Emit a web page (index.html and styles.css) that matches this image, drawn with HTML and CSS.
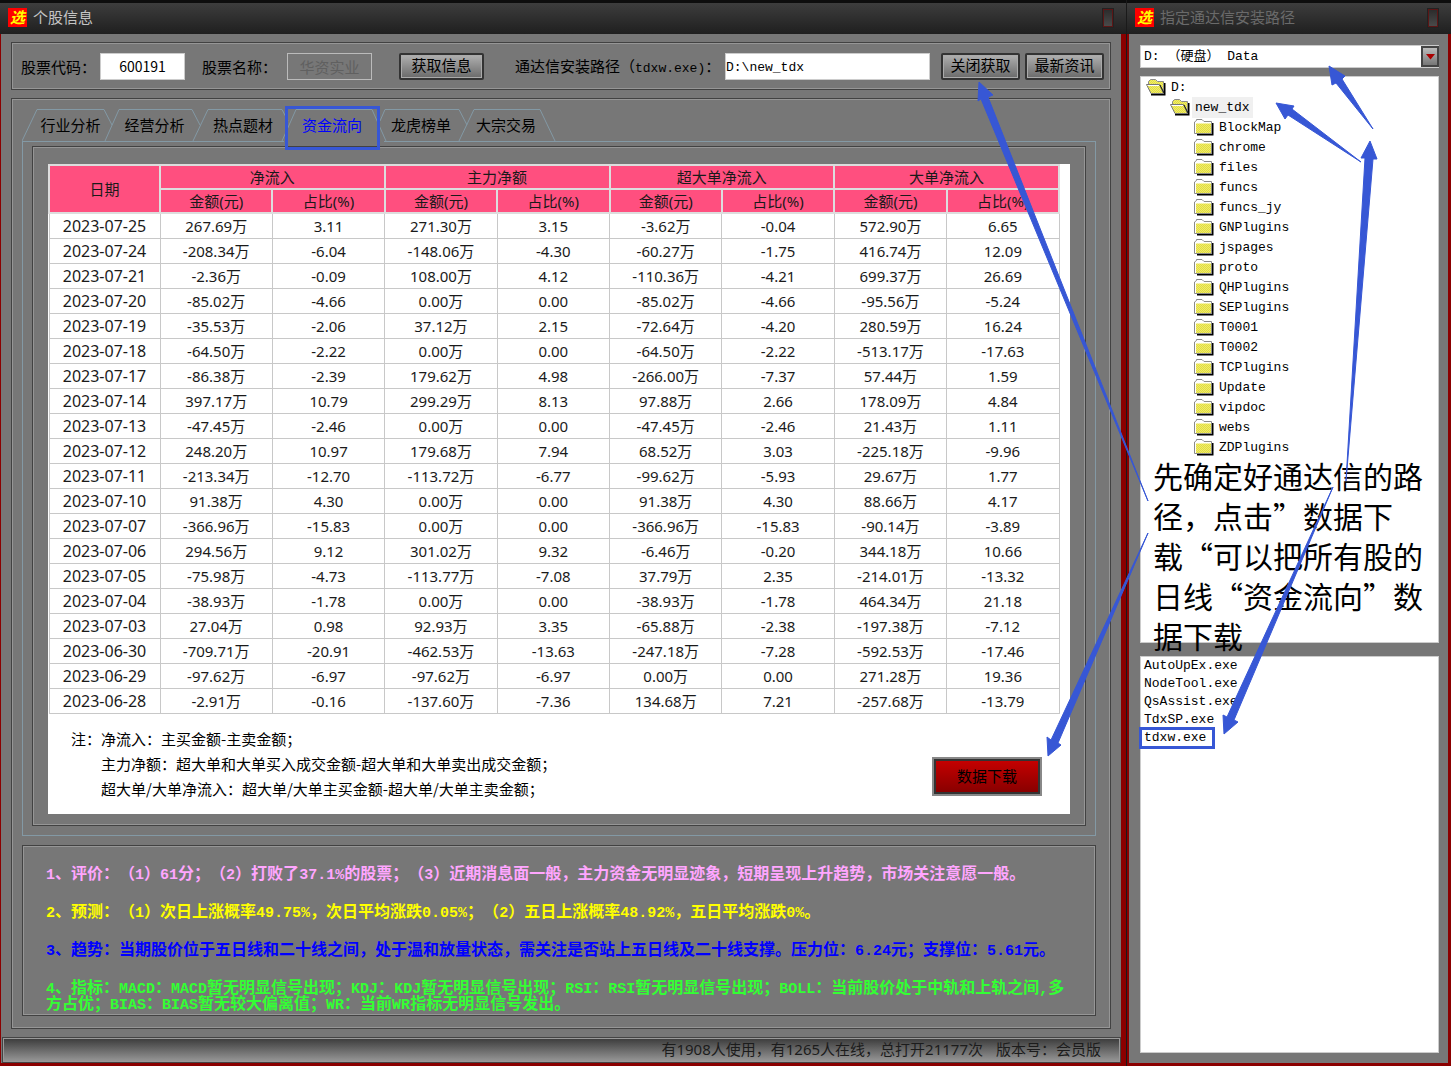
FILE: index.html
```html
<!DOCTYPE html>
<html lang="zh-CN">
<head>
<meta charset="utf-8">
<title>个股信息</title>
<link rel="stylesheet" href="styles.css">
</head>
<body>
<svg class="defs" aria-hidden="true">
  <defs>
    <pattern id="dots" width="2" height="2" patternUnits="userSpaceOnUse"><rect width="2" height="2" fill="#e3df3c"/><rect width="1" height="1" fill="#eeea70"/><rect x="1" y="1" width="1" height="1" fill="#eeea70"/></pattern>
  </defs>
  <symbol id="folder" viewBox="0 0 20 17">
    <path d="M3 15.500H18.500V4" fill="none" stroke="#000" stroke-width="2"/>
    <path d="M.5 14.500V3L2.500 1.500V.5H8L10 2.500H17.500V14.500Z" fill="#fff" stroke="#8a8a8a"/>
    <path d="M2 4H17V14H2Z" fill="url(#dots)"/>
    <path d="M1.500 14V4H17" fill="none" stroke="#fff"/>
  </symbol>
  <symbol id="folder-open" viewBox="0 0 20 17">
    <path d="M5 15.500H18.500V4" fill="none" stroke="#000" stroke-width="2"/>
    <path d="M2.500 5.500V2.500L4.500 .5H9.500L11.500 2.500H17.500V14" fill="url(#dots)" stroke="#8a8a8a"/>
    <path d="M.5 5.500H13.500L17.500 14.500H5Z" fill="url(#dots)" stroke="#777"/>
    <path d="M1.500 6.500H13" stroke="#fff"/>
    <path d="M14 6L18 14" stroke="#111"/>
  </symbol>
</svg>

<div class="desktop">
  <main class="window window-main">
    <header class="titlebar">
      <span class="logo">选</span>
      <h1 class="title">个股信息</h1>
      <button class="close" type="button" aria-label="关闭"></button>
    </header>
    <div class="frame">
      <form class="group toolbar">
        <label class="label-code" for="code">股票代码：</label>
        <input class="field field-code" id="code" type="text" value="600191">
        <label class="label-name" for="name">股票名称：</label>
        <input class="field field-name" id="name" type="text" value="华资实业" disabled>
        <button class="btn btn-fetch" type="button">获取信息</button>
        <label class="label-path" for="path">通达信安装路径（<span class="mono">tdxw.exe)</span>：</label>
        <input class="field field-path" id="path" type="text" value="D:\new_tdx">
        <button class="btn btn-stop" type="button">关闭获取</button>
        <button class="btn" type="button">最新资讯</button>
      </form>

      <section class="group content">
        <nav class="tabs">
          <svg class="tab-lines" width="540" height="33" viewBox="0 0 540 33" aria-hidden="true">
            <path d="M0 32L15 .5H82L90 16M83 32L97 .5H170L178 16M171 32L186 .5H260L266 12M260 32L274 .5H350L364 32M358 12L363 .5H437L445 16M437 32L452 .5H518L533 32"/>
          </svg>
          <button class="tab tab-a" type="button">行业分析</button>
          <button class="tab tab-b" type="button">经营分析</button>
          <button class="tab tab-c" type="button">热点题材</button>
          <button class="tab tab-d active" type="button">资金流向</button>
          <button class="tab tab-c" type="button">龙虎榜单</button>
          <button class="tab tab-e" type="button">大宗交易</button>
        </nav>
        <div class="pane">
          <div class="group pane-inner">
            <div class="sheet">
              <table class="flow">
                <colgroup><col class="col-date"><col span="8"></colgroup>
                <thead>
                  <tr><th rowspan="2">日期</th><th colspan="2">净流入</th><th colspan="2">主力净额</th><th colspan="2">超大单净流入</th><th colspan="2">大单净流入</th></tr>
                  <tr><th>金额(元)</th><th>占比(%)</th><th>金额(元)</th><th>占比(%)</th><th>金额(元)</th><th>占比(%)</th><th>金额(元)</th><th>占比(%)</th></tr>
                </thead>
                <tbody>
                  <tr><td>2023-07-25</td><td>267.69万</td><td>3.11</td><td>271.30万</td><td>3.15</td><td>-3.62万</td><td>-0.04</td><td>572.90万</td><td>6.65</td></tr>
                  <tr><td>2023-07-24</td><td>-208.34万</td><td>-6.04</td><td>-148.06万</td><td>-4.30</td><td>-60.27万</td><td>-1.75</td><td>416.74万</td><td>12.09</td></tr>
                  <tr><td>2023-07-21</td><td>-2.36万</td><td>-0.09</td><td>108.00万</td><td>4.12</td><td>-110.36万</td><td>-4.21</td><td>699.37万</td><td>26.69</td></tr>
                  <tr><td>2023-07-20</td><td>-85.02万</td><td>-4.66</td><td>0.00万</td><td>0.00</td><td>-85.02万</td><td>-4.66</td><td>-95.56万</td><td>-5.24</td></tr>
                  <tr><td>2023-07-19</td><td>-35.53万</td><td>-2.06</td><td>37.12万</td><td>2.15</td><td>-72.64万</td><td>-4.20</td><td>280.59万</td><td>16.24</td></tr>
                  <tr><td>2023-07-18</td><td>-64.50万</td><td>-2.22</td><td>0.00万</td><td>0.00</td><td>-64.50万</td><td>-2.22</td><td>-513.17万</td><td>-17.63</td></tr>
                  <tr><td>2023-07-17</td><td>-86.38万</td><td>-2.39</td><td>179.62万</td><td>4.98</td><td>-266.00万</td><td>-7.37</td><td>57.44万</td><td>1.59</td></tr>
                  <tr><td>2023-07-14</td><td>397.17万</td><td>10.79</td><td>299.29万</td><td>8.13</td><td>97.88万</td><td>2.66</td><td>178.09万</td><td>4.84</td></tr>
                  <tr><td>2023-07-13</td><td>-47.45万</td><td>-2.46</td><td>0.00万</td><td>0.00</td><td>-47.45万</td><td>-2.46</td><td>21.43万</td><td>1.11</td></tr>
                  <tr><td>2023-07-12</td><td>248.20万</td><td>10.97</td><td>179.68万</td><td>7.94</td><td>68.52万</td><td>3.03</td><td>-225.18万</td><td>-9.96</td></tr>
                  <tr><td>2023-07-11</td><td>-213.34万</td><td>-12.70</td><td>-113.72万</td><td>-6.77</td><td>-99.62万</td><td>-5.93</td><td>29.67万</td><td>1.77</td></tr>
                  <tr><td>2023-07-10</td><td>91.38万</td><td>4.30</td><td>0.00万</td><td>0.00</td><td>91.38万</td><td>4.30</td><td>88.66万</td><td>4.17</td></tr>
                  <tr><td>2023-07-07</td><td>-366.96万</td><td>-15.83</td><td>0.00万</td><td>0.00</td><td>-366.96万</td><td>-15.83</td><td>-90.14万</td><td>-3.89</td></tr>
                  <tr><td>2023-07-06</td><td>294.56万</td><td>9.12</td><td>301.02万</td><td>9.32</td><td>-6.46万</td><td>-0.20</td><td>344.18万</td><td>10.66</td></tr>
                  <tr><td>2023-07-05</td><td>-75.98万</td><td>-4.73</td><td>-113.77万</td><td>-7.08</td><td>37.79万</td><td>2.35</td><td>-214.01万</td><td>-13.32</td></tr>
                  <tr><td>2023-07-04</td><td>-38.93万</td><td>-1.78</td><td>0.00万</td><td>0.00</td><td>-38.93万</td><td>-1.78</td><td>464.34万</td><td>21.18</td></tr>
                  <tr><td>2023-07-03</td><td>27.04万</td><td>0.98</td><td>92.93万</td><td>3.35</td><td>-65.88万</td><td>-2.38</td><td>-197.38万</td><td>-7.12</td></tr>
                  <tr><td>2023-06-30</td><td>-709.71万</td><td>-20.91</td><td>-462.53万</td><td>-13.63</td><td>-247.18万</td><td>-7.28</td><td>-592.53万</td><td>-17.46</td></tr>
                  <tr><td>2023-06-29</td><td>-97.62万</td><td>-6.97</td><td>-97.62万</td><td>-6.97</td><td>0.00万</td><td>0.00</td><td>271.28万</td><td>19.36</td></tr>
                  <tr><td>2023-06-28</td><td>-2.91万</td><td>-0.16</td><td>-137.60万</td><td>-7.36</td><td>134.68万</td><td>7.21</td><td>-257.68万</td><td>-13.79</td></tr>
                </tbody>
              </table>
              <div class="sheet-foot">
                <div class="notes">
                  <p class="note note-lead">注：净流入：主买金额-主卖金额；</p>
                  <p class="note">主力净额：超大单和大单买入成交金额-超大单和大单卖出成交金额；</p>
                  <p class="note">超大单/大单净流入：超大单/大单主买金额-超大单/大单主卖金额；</p>
                </div>
                <button class="download" type="button">数据下载</button>
              </div>
            </div>
          </div>
        </div>

        <div class="group analysis">
          <p class="line pink"><span class="n">1</span>、评价：（<span class="n">1</span>）<span class="n">61</span>分；（<span class="n">2</span>）打败了<span class="n">37.1%</span>的股票；（<span class="n">3</span>）近期消息面一般，主力资金无明显迹象，短期呈现上升趋势，市场关注意愿一般。</p>
          <p class="line yellow"><span class="n">2</span>、预测：（<span class="n">1</span>）次日上涨概率<span class="n">49.75%</span>，次日平均涨跌<span class="n">0.05%</span>；（<span class="n">2</span>）五日上涨概率<span class="n">48.92%</span>，五日平均涨跌<span class="n">0%</span>。</p>
          <p class="line blue"><span class="n">3</span>、趋势：当期股价位于五日线和二十线之间，处于温和放量状态，需关注是否站上五日线及二十线支撑。压力位：<span class="n">6.24</span>元；支撑位：<span class="n">5.61</span>元。</p>
          <p class="line green"><span class="n">4</span>、指标：<span class="n">MACD</span>：<span class="n">MACD</span>暂无明显信号出现；<span class="n">KDJ</span>：<span class="n">KDJ</span>暂无明显信号出现；<span class="n">RSI</span>：<span class="n">RSI</span>暂无明显信号出现；<span class="n">BOLL</span>：当前股价处于中轨和上轨之间<span class="n">,</span>多<br>方占优；<span class="n">BIAS</span>：<span class="n">BIAS</span>暂无较大偏离值；<span class="n">WR</span>：当前<span class="n">WR</span>指标无明显信号发出。</p>
        </div>
      </section>

      <footer class="status"><span>有1908人使用，有1265人在线，总打开21177次</span><span>版本号：会员版</span></footer>
    </div>
  </main>

  <aside class="window window-side">
    <header class="titlebar">
      <span class="logo">选</span>
      <h2 class="title title-dim">指定通达信安装路径</h2>
      <button class="close" type="button" aria-label="关闭"></button>
    </header>
    <div class="frame side-frame">
      <div class="drive">
        <select class="drive-select" aria-label="驱动器"><option>D: （硬盘） Data</option></select>
        <span class="drive-arrow"><svg width="9" height="6" viewBox="0 0 9 6" aria-hidden="true"><path d="M0 0H9L4.500 5.500Z" fill="#a00"/></svg></span>
      </div>
      <ul class="box tree">
        <li class="node"><svg class="ico"><use href="#folder-open"/></svg><span>D:</span></li>
        <li class="node level-1"><svg class="ico"><use href="#folder-open"/></svg><span class="picked">new_tdx</span></li>
        <li class="node level-2"><svg class="ico"><use href="#folder"/></svg><span>BlockMap</span></li>
        <li class="node level-2"><svg class="ico"><use href="#folder"/></svg><span>chrome</span></li>
        <li class="node level-2"><svg class="ico"><use href="#folder"/></svg><span>files</span></li>
        <li class="node level-2"><svg class="ico"><use href="#folder"/></svg><span>funcs</span></li>
        <li class="node level-2"><svg class="ico"><use href="#folder"/></svg><span>funcs_jy</span></li>
        <li class="node level-2"><svg class="ico"><use href="#folder"/></svg><span>GNPlugins</span></li>
        <li class="node level-2"><svg class="ico"><use href="#folder"/></svg><span>jspages</span></li>
        <li class="node level-2"><svg class="ico"><use href="#folder"/></svg><span>proto</span></li>
        <li class="node level-2"><svg class="ico"><use href="#folder"/></svg><span>QHPlugins</span></li>
        <li class="node level-2"><svg class="ico"><use href="#folder"/></svg><span>SEPlugins</span></li>
        <li class="node level-2"><svg class="ico"><use href="#folder"/></svg><span>T0001</span></li>
        <li class="node level-2"><svg class="ico"><use href="#folder"/></svg><span>T0002</span></li>
        <li class="node level-2"><svg class="ico"><use href="#folder"/></svg><span>TCPlugins</span></li>
        <li class="node level-2"><svg class="ico"><use href="#folder"/></svg><span>Update</span></li>
        <li class="node level-2"><svg class="ico"><use href="#folder"/></svg><span>vipdoc</span></li>
        <li class="node level-2"><svg class="ico"><use href="#folder"/></svg><span>webs</span></li>
        <li class="node level-2"><svg class="ico"><use href="#folder"/></svg><span>ZDPlugins</span></li>
      </ul>
      <ul class="box files">
        <li class="file">AutoUpEx.exe</li>
        <li class="file">NodeTool.exe</li>
        <li class="file">QsAssist.exe</li>
        <li class="file">TdxSP.exe</li>
        <li class="file marked">tdxw.exe</li>
      </ul>
    </div>
  </aside>

  <!-- Tutorial callout drawn over both windows -->
  <p class="callout">先确定好通达信的路<br>径，点击”数据下<br>载“可以把所有股的<br>日线“资金流向”数<br>据下载</p>
  <svg class="arrows" width="1451" height="1066" viewBox="0 0 1451 1066" aria-hidden="true">
    <path d="M979 82L993 95L988 97L1148 501L981 99L978 101Z"/>
    <path d="M1048 756L1047 737L1051 740L1148 533L1058 743L1061 745Z"/>
    <path d="M1329 66L1345 76L1342 79L1373 129L1336 83L1332 85Z"/>
    <path d="M1276 103L1294 106L1292 109L1361 162L1288 115L1285 119Z"/>
    <path d="M1370 141L1377 159L1373 159L1346 481L1365 158L1361 158Z"/>
    <path d="M1224 734L1223 715L1227 717L1333 487L1234 720L1238 722Z"/>
  </svg>
</div>
</body>
</html>
```

FILE: styles.css
```css
*, *::before, *::after { box-sizing: border-box; }

body {
  margin: 0;
  background: #777;
  color: #000;
  font: 15px/20px "Noto Sans CJK SC", sans-serif;
  text-spacing-trim: space-all;
}

h1, h2, p, ul { margin: 0; padding: 0; }
ul { list-style: none; }
button, input, select { font: inherit; color: inherit; margin: 0; }

.defs { position: absolute; width: 0; height: 0; }
.mono { font-family: "Liberation Mono", monospace; font-size: 13px; }

/* Windows */
.desktop { position: relative; display: flex; min-height: 100vh; overflow: hidden; }
.window { display: flex; flex-direction: column; }
.window-main { flex: 1; min-width: 0; }
.window-side { flex: 0 0 325px; border-left: 1px solid #1a1a1a; }

.titlebar {
  display: flex;
  align-items: center;
  gap: 6px;
  height: 34px;
  padding: 0 13px 0 8px;
  border-top: 3px solid #0d0d0d;
  background: linear-gradient(#3d3d3d, #1f1f1f);
}
.logo {
  width: 19px;
  height: 19px;
  margin-bottom: 2px;
  background: #f00;
  color: #ff0;
  font-size: 15px;
  font-weight: 700;
  font-style: italic;
  line-height: 18px;
  text-align: center;
}
.title { flex: 1; margin-bottom: 3px; color: #c4c4c4; font-size: 15px; font-weight: 400; }
.title-dim { color: #6a6a6a; }
.close { width: 10px; height: 18px; margin-bottom: 2px; padding: 0; border: 1px solid #5b1616; outline: 1px solid #222; background: linear-gradient(#2c2c2c, #4a4a4a); }

.frame {
  flex: 1;
  display: flex;
  flex-direction: column;
  border: solid #8b0000;
  border-width: 0 5px 4px 1px;
  background: #777;
}
.window-main .frame { padding-top: 8px; }

/* Etched group box */
.group { border: 1px solid #424242; box-shadow: inset 0 0 0 1px #969696; }

/* Query bar */
.toolbar {
  display: flex;
  align-items: center;
  height: 48px;
  margin: 0 10px 8px;
  padding: 0 6px 0 9px;
  white-space: nowrap;
}
.toolbar label { padding-top: 2px; }
.field { height: 27px; border: 1px solid #ccc; background: #fff; }
.label-code { width: 79px; }
.label-name { width: 85px; }
.label-path { width: 210px; }
.field-code { width: 85px; margin-right: 17px; font-size: 14px; text-align: center; }
.field-name { width: 85px; margin-right: 27px; border-color: #bbb; background: transparent; color: #606060; text-align: center; }
.field-path { flex: 1; min-width: 0; margin-right: 11px; padding: 2px 0 0; font-family: "Liberation Mono", monospace; font-size: 13px; }
.btn {
  width: 79px;
  height: 27px;
  padding: 0 0 2px;
  border: 2px solid #333;
  border-radius: 2px;
  box-shadow: inset 0 0 0 1px #aaa;
  background: linear-gradient(#b0b0b0, #6a6a6a);
  line-height: 20px;
}
.btn-fetch { width: 85px; margin-right: 31px; }
.btn-stop { margin-right: 5px; }

/* Content */
.content { flex: 1; margin: 0 10px 8px; padding: 10px 14px 12px 10px; }

.tabs { position: relative; display: flex; padding-left: 7px; height: 32px; }
.tab-lines { position: absolute; left: 0; top: 0; }
.tab-lines path { fill: none; stroke: #8399a5; stroke-width: 1; }
.tab { position: relative; padding: 0; border: 0; background: none; }
.tab-a { width: 83px; }
.tab-b { width: 85px; }
.tab-c { width: 92px; }
.tab-d { width: 86px; }
.tab-e { width: 78px; }
.active { color: #00f; }
.active::before { content: ""; position: absolute; left: -5px; right: -9px; bottom: -1px; height: 1px; background: #777; }
.active::after { content: ""; position: absolute; left: -4px; right: -5px; top: -3px; height: 44px; border: 3px solid #3757d5; }

.pane { padding: 4px 9px 9px; border: 1px solid #8399a5; }
.pane-inner { padding: 17px 15px 11px; }
.sheet { min-height: 650px; background: #fff; }

.flow {
  width: calc(100% - 10px);
  border-collapse: collapse;
  table-layout: fixed;
  color: #1a1a1a;
  font-family: "Noto Sans", "Noto Sans CJK SC", sans-serif;
}
.col-date { width: 111px; }
.flow th, .flow td { height: 25px; padding: 0; border: 1px solid #c8c8c8; line-height: 20px; text-align: center; }
.flow thead th { height: 24px; border: 2px solid #ddd; background: #ff4f7f; font-weight: 400; }
.flow td:first-child { font-size: 16px; }

.sheet-foot { display: flex; justify-content: space-between; align-items: center; padding: 12px 28px 0 22px; }
.note { padding-left: 31px; line-height: 25px; }
.note-lead { text-indent: -30px; }
.download {
  width: 110px;
  height: 39px;
  margin-top: 26px;
  padding: 0;
  border: 2px solid #888;
  outline: 2px solid #333;
  outline-offset: -4px;
  background: linear-gradient(#c80000, #850000);
}

.analysis { margin-top: 9px; padding: 18px 24px 4px 23px; height: 171px; }
.line { margin-bottom: 22px; font-size: 16px; font-weight: 700; line-height: 16px; white-space: nowrap; }
.n { font-family: "Liberation Mono", monospace; font-size: 15px; line-height: 0; }
.pink { color: #ffa6ff; }
.yellow { color: #ff0; }
.blue { color: #00f; }
.green { color: #3f3; }

.status {
  display: flex;
  justify-content: flex-end;
  align-items: center;
  gap: 13px;
  height: 26px;
  margin: 0 0 0 1px;
  padding: 0 19px 2px 0;
  border: 1px solid #444;
  box-shadow: inset 0 0 0 1px #999;
  background: linear-gradient(#3a3a3a, #999);
  color: #1c1c1c;
  font-family: "Noto Sans", "Noto Sans CJK SC", sans-serif;
}

/* Install path window */
.side-frame { border-width: 0 3px 4px 2px; padding: 11px 9px 10px 11px; }
.drive { position: relative; display: flex; height: 23px; margin-bottom: 8px; }
.drive-select {
  flex: 1;
  padding: 0 0 0 3px;
  border: 1px solid #ccc;
  background: #fff;
  appearance: none;
  font-family: "Liberation Mono", "Noto Sans CJK SC", monospace;
  font-size: 13px;
}
.drive-arrow {
  position: absolute;
  right: 0;
  top: 1px;
  display: flex;
  align-items: center;
  justify-content: center;
  width: 18px;
  height: 21px;
  border: 2px solid #444;
  background: linear-gradient(#bbb, #777);
  pointer-events: none;
}
.box { border: 1px solid #ccc; background: #fff; font-family: "Liberation Mono", monospace; font-size: 13px; }
.tree { height: 567px; margin-bottom: 13px; }
.node { display: flex; align-items: center; gap: 2px; height: 20px; padding-left: 5px; }
.level-1 { padding-left: 29px; }
.level-2 { padding-left: 53px; }
.ico { width: 20px; height: 17px; }
.node span { padding: 1px 3px 0; }
.picked { background: #f0f0f0; }
.files { flex: 1; }
.file { position: relative; height: 18px; padding-left: 3px; line-height: 18px; }
.marked::after { content: ""; position: absolute; left: -2px; top: -2px; width: 76px; height: 22px; border: 3px solid #3757d5; }

/* Annotation layer */
.callout { position: absolute; right: 28px; top: 455px; width: 270px; font-size: 30px; line-height: 40px; white-space: nowrap; }
.arrows { position: absolute; right: 0; top: 0; pointer-events: none; }
.arrows path { fill: #3757d5; stroke: #3757d5; stroke-width: 1; }
```
